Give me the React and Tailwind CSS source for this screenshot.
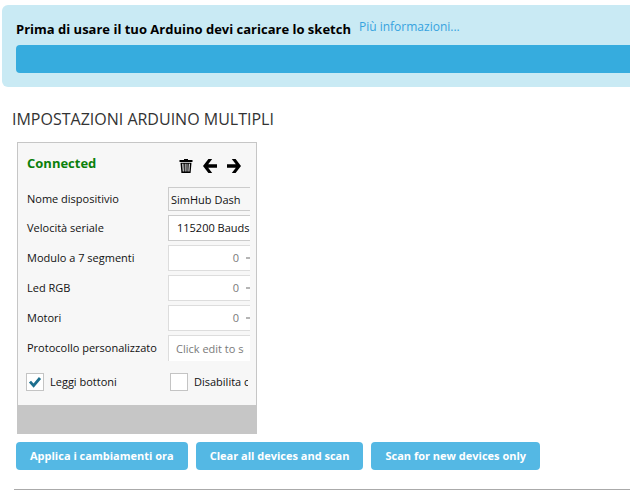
import React, { useState } from 'react';

const counters = [
  { id: 'segments', label: 'Modulo a 7 segmenti' },
  { id: 'leds', label: 'Led RGB' },
  { id: 'motors', label: 'Motori' },
];

const actions = ['Applica i cambiamenti ora', 'Clear all devices and scan', 'Scan for new devices only'];

const TrashIcon = () => (
  <svg width="14" height="14" viewBox="0 0 14 14" aria-hidden="true">
    <path
      fill="#000"
      fillRule="evenodd"
      d="M5 0h4v1h4.5v2H.5V1H5zM1.5 3.8h11L11.6 14H2.4zM3.2 4.8l.6 7.7h1l-.4-7.7zM5.8 4.8v7.7h.8V4.8zM7.6 4.8v7.7h.8V4.8zM9.8 4.8l-.4 7.7h1l.5-7.7z"
    />
  </svg>
);

const ArrowIcon = ({ flip }) => (
  <svg width="14" height="14" viewBox="0 0 14 14" aria-hidden="true" className={flip ? 'rotate-180' : ''}>
    <path fill="#000" d="M5.4 0H9.2L5.2 5.2H14V8.8H5.2L9.2 14H5.4L0 7z" />
  </svg>
);

const Row = ({ id, label, children }) => (
  <div className="grid grid-cols-[141px_1fr] items-center">
    <label htmlFor={id} className="whitespace-nowrap">{label}</label>
    <div className="flex overflow-hidden">{children}</div>
  </div>
);

const CheckBox = ({ label, checked, onChange }) => (
  <label className="flex items-center gap-1.5 overflow-hidden whitespace-nowrap">
    <span className="relative h-[18px] w-[18px] shrink-0">
      <input
        type="checkbox"
        checked={checked}
        onChange={onChange}
        className="block h-[18px] w-[18px] appearance-none border border-[#c4c4c4] bg-white"
      />
      {checked && (
        <svg viewBox="0 0 18 18" className="pointer-events-none absolute inset-0" aria-hidden="true">
          <path d="M4 8.6l3.6 4L14 5" fill="none" stroke="#1d6f8e" strokeWidth="2.8" />
        </svg>
      )}
    </span>
    {label}
  </label>
);

const DeviceCard = () => {
  const [name, setName] = useState('SimHub Dash');
  const [readButtons, setReadButtons] = useState(true);
  const [disabled, setDisabled] = useState(false);

  return (
    <section className="w-60 border border-[#c6c6c6] bg-[#f7f7f7] text-[11px] text-[#111111]">
      <div className="pt-2 pr-1.5 pl-2">
        <div className="flex h-9 items-start justify-between pr-[9px] pl-px">
          <h3 className="pt-0.5 text-[13px] leading-5 font-bold text-[#0b800b]">Connected</h3>
          <div className="flex gap-2.5 pt-2">
            <button type="button" aria-label="Elimina"><TrashIcon /></button>
            <button type="button" aria-label="Sposta a sinistra"><ArrowIcon /></button>
            <button type="button" aria-label="Sposta a destra"><ArrowIcon flip /></button>
          </div>
        </div>

        <div className="flex flex-col gap-1 pl-px">
          <Row id="name" label="Nome dispositivio">
            <input
              id="name"
              value={name}
              onChange={(e) => setName(e.target.value)}
              className="h-6 w-full border border-r-0 border-[#cccccc] bg-[#f7f7f7] pl-0.5"
            />
          </Row>
          <Row id="speed" label="Velocità seriale">
            <select
              id="speed"
              className="h-[26px] w-28 shrink-0 appearance-none border border-[#cccccc] bg-white pl-2"
            >
              <option>115200 Bauds</option>
            </select>
          </Row>
          {counters.map(({ id, label }) => (
            <Row key={id} id={id} label={label}>
              <div className="flex h-[26px] w-full items-center border border-r-0 border-[#dddddd] bg-white text-[#7a7a7a]">
                <input id={id} inputMode="numeric" defaultValue="0" className="w-[70px] shrink-0 text-right" />
                <button type="button" aria-label="Riduci" className="ml-[7px] h-0.5 w-2 shrink-0 bg-[#b5b5b5]" />
              </div>
            </Row>
          ))}
          <Row id="protocol" label="Protocollo personalizzato">
            <input
              id="protocol"
              placeholder="Click edit to set"
              className="h-[26px] w-full border-t border-l border-[#dddddd] bg-white pr-1.5 pl-[7px] placeholder:text-[#7a7a7a]"
            />
          </Row>
        </div>

        <div className="grid grid-cols-[144px_78px] pt-3 pb-3.5">
          <CheckBox label="Leggi bottoni" checked={readButtons} onChange={() => setReadButtons(!readButtons)} />
          <CheckBox label="Disabilita c" checked={disabled} onChange={() => setDisabled(!disabled)} />
        </div>
      </div>
      <div className="h-7 bg-[#c6c6c6]" />
    </section>
  );
};

export default function App() {
  return (
    <main className="bg-white pt-[5px] font-['Open_Sans',sans-serif] text-xs">
      <section className="ml-0.5 rounded-l-md bg-[#c9eaf4] pt-3 pb-3.5 pl-3.5">
        <div className="flex h-7 items-start gap-2 whitespace-nowrap">
          <strong className="pt-0.5 text-[13px] leading-5 font-bold text-black">
            Prima di usare il tuo Arduino devi caricare lo sketch
          </strong>
          <a href="#info" className="text-xs leading-5 text-[#36a3df]">Più informazioni...</a>
        </div>
        <button type="button" aria-label="Carica lo sketch" className="block h-7 w-full rounded-l-sm bg-[#36acde]" />
      </section>

      <h2 className="mt-5 pl-3 text-base leading-6 text-[#333333]">IMPOSTAZIONI ARDUINO MULTIPLI</h2>

      <div className="mt-[11px] ml-[17px]">
        <DeviceCard />
      </div>

      <div className="mt-2 ml-4 flex gap-2">
        {actions.map((action) => (
          <button
            key={action}
            type="button"
            className="h-7 rounded-sm bg-[#54b8e4] px-3.5 text-[11px] font-bold whitespace-nowrap text-white"
          >
            {action}
          </button>
        ))}
      </div>

      <hr className="mt-[19px] ml-3.5 border-[#aaaaaa]" />
    </main>
  );
}
